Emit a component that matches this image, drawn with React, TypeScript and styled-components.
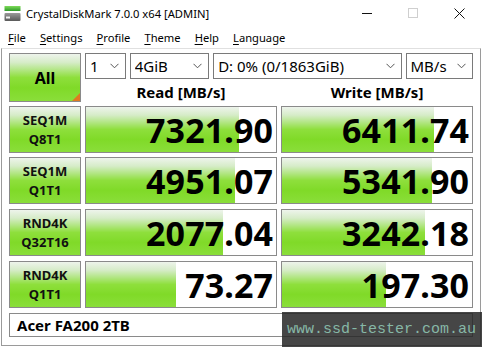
import React from "react";
import styled, { createGlobalStyle } from "styled-components";

const Global = createGlobalStyle`
  html, body { margin: 0; padding: 0; background: #fff; }
  * { box-sizing: border-box; }
`;

const UI = `"Noto Sans", "Open Sans", "DejaVu Sans", sans-serif`;

const Window = styled.div`
  position: relative;
  width: 482px;
  height: 347px;
  overflow: hidden;
  background: #fff;
  display: flex;
  flex-direction: column;
  font-family: ${UI};
  color: #000;
`;

const TitleBar = styled.div`
  height: 26px;
  flex: none;
  display: flex;
  align-items: center;
  padding-left: 4px;
`;

const Title = styled.span`
  margin-left: 5px;
  font-size: 11.2px;
  flex: 1;
  white-space: nowrap;
`;

const CaptionButton = styled.div`
  width: 46px;
  height: 26px;
  display: flex;
  align-items: center;
  justify-content: center;
`;

const MenuBar = styled.div`
  height: 22px;
  flex: none;
  display: flex;
  align-items: center;
  padding-left: 1px;
`;

const MenuItem = styled.span`
  font-size: 11.2px;
  padding: 0 7px;
  u { text-decoration: underline; text-underline-offset: 2px; }
`;

const Client = styled.div`
  flex: 1;
  margin: 0 1px 1px 1px;
  border: 1px solid #9a9a9a;
  border-top-color: #e0e0e0;
  padding: 4px 0 0 7px;
  display: grid;
  grid-template-columns: 72px 192px 192px;
  grid-template-rows: 26px 23px 51px 51px 52px 52px 30px;
  column-gap: 4px;
`;

const green = `linear-gradient(to bottom, #eef4ec 0%, #d6ecc8 18%, #b2e684 34%, #8edf3c 50%, #80da28 72%, #8ade3a 100%)`;

const AllButton = styled.div`
  position: relative;
  grid-row: 1 / 3;
  border: 1px solid #8a8a8a;
  background: ${green};
  display: flex;
  align-items: center;
  justify-content: center;
  font-weight: 700;
  font-size: 16px;
  &::after {
    content: "";
    position: absolute;
    right: 0;
    bottom: 0;
    border-style: solid;
    border-width: 0 0 8px 8px;
    border-color: transparent transparent #e07a22 transparent;
  }
`;

const ComboRow = styled.div`
  grid-column: 2 / 4;
  display: flex;
  gap: 4px;
`;

const Combo = styled.div<{ $w: number }>`
  width: ${(p) => p.$w}px;
  height: 26px;
  border: 1px solid #7a7a7a;
  background: #fff;
  display: flex;
  align-items: center;
  padding: 0 6px 0 4px;
  font-size: 15px;
  white-space: nowrap;
  span { flex: 1; overflow: hidden; }
`;

const Header = styled.div`
  display: flex;
  align-items: center;
  justify-content: center;
  font-weight: 700;
  font-size: 15px;
  padding-top: 3px;
`;

const RowLabel = styled.div<{ $mt: number }>`
  margin-top: ${(p) => p.$mt}px;
  height: 47px;
  border: 1px solid #8a8a8a;
  background: ${green};
  display: flex;
  flex-direction: column;
  align-items: center;
  justify-content: center;
  font-weight: 700;
  font-size: 13px;
  line-height: 19px;
  color: #111;
`;

const ValueBox = styled.div<{ $mt: number }>`
  margin-top: ${(p) => p.$mt}px;
  height: 47px;
  border: 1px solid #8a8a8a;
  background-color: #fff;
  background-image: ${green};
  background-repeat: no-repeat;
  display: flex;
  align-items: center;
  justify-content: flex-end;
  padding-right: 3px;
  font-weight: 700;
  font-size: 34px;
  letter-spacing: 0.1px;
`;

const Comment = styled.div`
  margin-top: 5px;
  height: 24px;
  grid-column: 1 / 4;
  border: 1px solid #8a8a8a;
  display: flex;
  align-items: center;
  padding-left: 7px;
  font-weight: 700;
  font-size: 15px;
`;

const Watermark = styled.div`
  position: absolute;
  left: 282px;
  top: 312px;
  width: 200px;
  height: 35px;
  background: rgba(38, 38, 38, 0.85);
  color: #86b8a6;
  font-family: "Liberation Mono", "DejaVu Sans Mono", monospace;
  font-size: 15px;
  display: flex;
  align-items: center;
  padding-left: 5px;
  padding-bottom: 1px;
`;

const Chevron = () => (
  <svg width="9" height="6" viewBox="0 0 9 6">
    <path d="M0.5 0.8 L4.5 4.8 L8.5 0.8" fill="none" stroke="#555" strokeWidth="1" />
  </svg>
);

const AppIcon = () => (
  <svg width="17" height="17" viewBox="0 0 17 17">
    <defs>
      <linearGradient id="gb" x1="0" y1="0" x2="0" y2="1">
        <stop offset="0" stopColor="#7fdc5a" />
        <stop offset="1" stopColor="#2f9a2a" />
      </linearGradient>
      <linearGradient id="db" x1="0" y1="0" x2="0" y2="1">
        <stop offset="0" stopColor="#9a9a9a" />
        <stop offset="1" stopColor="#5a5a5a" />
      </linearGradient>
    </defs>
    <rect x="0.5" y="1" width="16" height="5" fill="url(#gb)" />
    <rect x="0.5" y="8" width="16" height="8" rx="1" fill="url(#db)" />
    <rect x="2" y="11.5" width="4" height="2" fill="#f2f2f2" />
  </svg>
);

const rows = [
  { a: "SEQ1M", b: "Q8T1", r: "7321.90", w: "6411.74", rf: 153, wf: 152, mt: 4 },
  { a: "SEQ1M", b: "Q1T1", r: "4951.07", w: "5341.90", rf: 149, wf: 150, mt: 4 },
  { a: "RND4K", b: "Q32T16", r: "2077.04", w: "3242.18", rf: 137, wf: 143, mt: 5 },
  { a: "RND4K", b: "Q1T1", r: "73.27", w: "197.30", rf: 90, wf: 104, mt: 5 },
];

export default function App() {
  return (
    <Window>
      <Global />
      <TitleBar>
        <AppIcon />
        <Title>CrystalDiskMark 7.0.0 x64 [ADMIN]</Title>
        <CaptionButton>
          <svg width="10" height="10" viewBox="0 0 10 10">
            <path d="M0 5.5 H10" stroke="#111" strokeWidth="1" />
          </svg>
        </CaptionButton>
        <CaptionButton>
          <svg width="10" height="10" viewBox="0 0 10 10">
            <rect x="0.5" y="0.5" width="9" height="9" fill="none" stroke="#cfcfcf" strokeWidth="1" />
          </svg>
        </CaptionButton>
        <CaptionButton>
          <svg width="11" height="11" viewBox="0 0 11 11">
            <path d="M0.5 0.5 L10.5 10.5 M10.5 0.5 L0.5 10.5" stroke="#111" strokeWidth="1" />
          </svg>
        </CaptionButton>
      </TitleBar>
      <MenuBar>
        <MenuItem><u>F</u>ile</MenuItem>
        <MenuItem><u>S</u>ettings</MenuItem>
        <MenuItem><u>P</u>rofile</MenuItem>
        <MenuItem><u>T</u>heme</MenuItem>
        <MenuItem><u>H</u>elp</MenuItem>
        <MenuItem><u>L</u>anguage</MenuItem>
      </MenuBar>
      <Client>
        <AllButton>All</AllButton>
        <ComboRow>
          <Combo $w={41}><span>1</span><Chevron /></Combo>
          <Combo $w={80}><span>4GiB</span><Chevron /></Combo>
          <Combo $w={190}><span>D: 0% (0/1863GiB)</span><Chevron /></Combo>
          <Combo $w={68}><span>MB/s</span><Chevron /></Combo>
        </ComboRow>
        <Header>Read [MB/s]</Header>
        <Header>Write [MB/s]</Header>
        {rows.map((r, i) => (
          <React.Fragment key={i}>
            <RowLabel $mt={r.mt}>
              <div>{r.a}</div>
              <div>{r.b}</div>
            </RowLabel>
            <ValueBox $mt={r.mt} style={{ backgroundSize: `${r.rf}px 100%` }}>{r.r}</ValueBox>
            <ValueBox $mt={r.mt} style={{ backgroundSize: `${r.wf}px 100%` }}>{r.w}</ValueBox>
          </React.Fragment>
        ))}
        <Comment>Acer FA200 2TB</Comment>
      </Client>
      <Watermark>www.ssd-tester.com.au</Watermark>
    </Window>
  );
}
